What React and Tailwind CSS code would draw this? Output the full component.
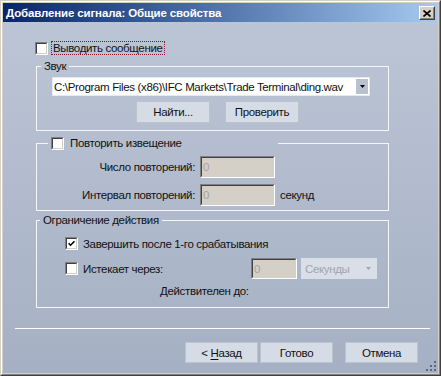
import React from "react";

function Check({ checked }) {
  return (
    <div className="w-[13px] h-[13px] shrink-0 border border-t-[#808080] border-l-[#808080] border-b-white border-r-white">
      <div className="w-full h-full border border-t-[#404040] border-l-[#404040] border-b-[#d4d0c8] border-r-[#d4d0c8] bg-white flex items-center justify-center">
        {checked && (
          <svg width="7" height="7" viewBox="0 0 7 7">
            <path d="M0.6 3.2 L2.6 5.2 L6.4 1.2" stroke="#000" strokeWidth="1.6" fill="none" />
          </svg>
        )}
      </div>
    </div>
  );
}

function Field({ className, children }) {
  return (
    <div className={"shrink-0 border border-t-[#808080] border-l-[#808080] border-b-white border-r-white " + className}>
      <div className="w-full h-full border border-t-[#404040] border-l-[#404040] border-b-[#d4d0c8] border-r-[#d4d0c8] bg-[#d4d0c8] pl-[1px] flex items-center text-[#a3a3a3]">
        {children}
      </div>
    </div>
  );
}

function Btn({ className, children }) {
  return (
    <div className={"shrink-0 flex items-center justify-center bg-[#d6dce6] border border-[#bcc3cf] text-[#111] " + className}>
      {children}
    </div>
  );
}

export default function App() {
  return (
    <div className="w-[441px] h-[376px] font-['Liberation_Sans',Arial,sans-serif] text-[11.5px] tracking-[-0.35px] leading-[14px] text-[#111] border border-t-[#d4d0c8] border-l-[#d4d0c8] border-b-[#404040] border-r-[#404040]">
      <div className="w-full h-full flex flex-col border border-t-white border-l-white border-b-[#808080] border-r-[#808080] p-px bg-[#d4d0c8]">
        {/* Title bar */}
        <div className="h-[19px] shrink-0 flex items-center bg-linear-to-r from-[#0a246a] to-[#a6caf0] pl-[3px] pr-[3px]">
          <div className="text-white font-bold text-[11.5px] tracking-[-0.15px] leading-[14px] mt-[1px]">Добавление сигнала: Общие свойства</div>
          <div className="ml-auto w-[16px] h-[14px] border border-t-white border-l-white border-b-[#404040] border-r-[#404040] bg-[#d4d0c8] mt-[1px]">
            <div className="w-full h-full border border-t-[#d4d0c8] border-l-[#d4d0c8] border-b-[#808080] border-r-[#808080] flex items-center justify-center">
              <svg width="8" height="7" viewBox="0 0 8 7">
                <path d="M0.5 0.5 L7.5 6.5 M7.5 0.5 L0.5 6.5" stroke="#000" strokeWidth="1.6" />
              </svg>
            </div>
          </div>
        </div>

        {/* Body */}
        <div className="relative flex-1 flex flex-col bg-linear-to-b from-[#bcc5d5] to-[#a5b0c4]">
          <div className="mt-[19px] ml-[32px] flex items-center h-[14px]">
            <Check />
            <div className="ml-[3px] px-[1px] h-[14px] border border-dotted border-[#7a1a2a] leading-[12px]">Выводить сообщение</div>
          </div>

          {/* Звук */}
          <fieldset className="mt-[5px] ml-[33px] w-[353px] h-[71px] border border-[#f4f6fa] pt-[4px]">
            <legend className="ml-[4px] px-[3px] leading-[13px]">Звук</legend>
            <div className="ml-[15px] w-[318px] h-[19px] bg-white border border-[#e6eaf0] flex items-center pl-[1px]">
              <span className="flex-1 whitespace-nowrap overflow-hidden leading-[14px]">C:\Program Files (x86)\IFC Markets\Trade Terminal\ding.wav</span>
              <div className="w-[12px] h-[15px] mr-[1px] bg-[#b9c1cf] flex items-center justify-center">
                <svg width="5" height="3" viewBox="0 0 5 3"><path d="M0 0 H5 L2.5 3 Z" fill="#000" /></svg>
              </div>
            </div>
            <div className="mt-[5px] ml-[99px] flex">
              <Btn className="w-[74px] h-[22px]">Найти...</Btn>
              <Btn className="ml-[15px] w-[74px] h-[22px]">Проверить</Btn>
            </div>
          </fieldset>

          {/* Повторить извещение */}
          <fieldset className="mt-[6px] ml-[33px] w-[353px] h-[74px] border border-[#f4f6fa] pt-[6px]">
            <legend className="ml-[11px] w-[230px] pl-[3px] flex items-center h-[13px]">
              <Check />
              <span className="ml-[6px] leading-[13px]">Повторить извещение</span>
            </legend>
            <div className="flex items-center h-[22px]">
              <div className="w-[158px] text-right">Число повторений:</div>
              <Field className="ml-[5px] w-[75px] h-[22px]">0</Field>
            </div>
            <div className="mt-[6px] flex items-center h-[22px]">
              <div className="w-[158px] text-right">Интервал повторений:</div>
              <Field className="ml-[5px] w-[75px] h-[22px]">0</Field>
              <span className="ml-[5px]">секунд</span>
            </div>
          </fieldset>

          {/* Ограничение действия */}
          <fieldset className="mt-[3px] ml-[33px] w-[353px] h-[94px] border border-[#f4f6fa]">
            <legend className="ml-[3px] px-[3px] leading-[13px]">Ограничение действия</legend>
            <div className="mt-[10px] ml-[28px] flex items-center h-[13px]">
              <Check checked />
              <span className="ml-[5px]">Завершить после 1-го срабатывания</span>
            </div>
            <div className="mt-[8px] ml-[28px] flex items-center h-[21px]">
              <div className="w-[186px] flex items-center">
                <Check />
                <span className="ml-[5px]">Истекает через:</span>
              </div>
              <Field className="w-[46px] h-[21px]">0</Field>
              <div className="ml-[4px] w-[76px] h-[21px] bg-[#d9dee7] flex items-center pl-[4px] pr-[6px] text-[#a0a5ae]">
                <span className="flex-1">Секунды</span>
                <svg width="5" height="3" viewBox="0 0 5 3"><path d="M0 0 H5 L2.5 3 Z" fill="#a0a5ae" /></svg>
              </div>
            </div>
            <div className="mt-[5px] ml-[123px] h-[14px]">Действителен до:</div>
          </fieldset>

          {/* Separator */}
          <div className="mt-[20px] ml-[12px] w-[415px] h-px bg-white" />

          {/* Buttons */}
          <div className="mt-[13px] ml-[182px] flex">
            <Btn className="w-[73px] h-[21px]">
              <span>&lt; <span className="underline underline-offset-2">Н</span>азад</span>
            </Btn>
            <Btn className="ml-[2px] w-[73px] h-[21px]">Готово</Btn>
            <Btn className="ml-[12px] w-[73px] h-[21px]">Отмена</Btn>
          </div>

          {/* Gripper */}
          <svg className="absolute right-[1px] bottom-[1px]" width="12" height="12" viewBox="0 0 12 12">
            <rect x="9" y="1" width="2" height="2" fill="#5b6682" />
            <rect x="5" y="5" width="2" height="2" fill="#5b6682" />
            <rect x="9" y="5" width="2" height="2" fill="#5b6682" />
            <rect x="1" y="9" width="2" height="2" fill="#5b6682" />
            <rect x="5" y="9" width="2" height="2" fill="#5b6682" />
            <rect x="9" y="9" width="2" height="2" fill="#5b6682" />
          </svg>
        </div>
      </div>
    </div>
  );
}
